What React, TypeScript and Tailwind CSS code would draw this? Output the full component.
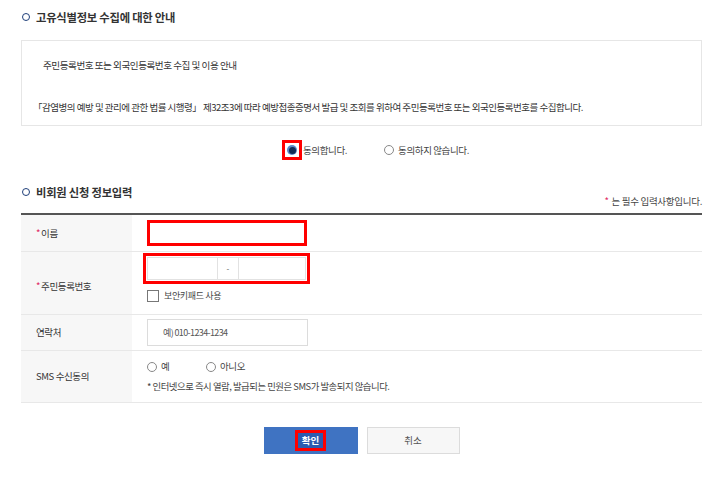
import React from 'react';

const font = { fontFamily: '"Noto Sans CJK KR", "Noto Sans", sans-serif' };

function SectionTitle({ children }: { children: React.ReactNode }) {
  return (
    <div className="flex items-center gap-[6px] h-[16px]">
      <span className="ml-[1px] w-[8px] h-[8px] rounded-full border-[1.5px] border-[#1f3f7a]" />
      <h2 className="text-[11.3px] font-bold text-[#333] tracking-[-0.02em]">{children}</h2>
    </div>
  );
}

function Radio({ checked }: { checked?: boolean }) {
  if (checked) {
    return (
      <span className="flex items-center justify-center w-[10px] h-[10px] rounded-full bg-[#5d86c4]">
        <span className="w-[7px] h-[7px] rounded-full bg-[#122c55]" />
      </span>
    );
  }
  return <span className="w-[10px] h-[10px] rounded-full border border-[#888] bg-white" />;
}

function Req() {
  return <span className="text-[#e0245e] mr-[1px]">*</span>;
}

function Row({ label, h, top, children }: { label: React.ReactNode; h: string; top?: boolean; children: React.ReactNode }) {
  return (
    <div className={`flex border-b border-[#e8e8e8] ${h}`}>
      <div className="w-[111px] shrink-0 bg-[#f7f7f7] flex items-center pl-[15px] text-[9.5px] text-[#333] tracking-[-0.04em]">
        {label}
      </div>
      <div className={`flex-1 flex flex-col pl-[15px] ${top ? 'justify-start pt-[1px]' : 'justify-center'}`}>{children}</div>
    </div>
  );
}

export default function App() {
  return (
    <div style={font} className="w-[718px] h-[487px] bg-white pl-[21px] pr-[16px] pt-[9px] text-[#333]">
      <SectionTitle>고유식별정보 수집에 대한 안내</SectionTitle>

      <div className="mt-[15px] h-[86px] border border-[#e6e6e6] pl-[21px] pt-[18px] text-[9.6px] tracking-[-0.05em] text-[#333]">
        <p className="leading-[12px]">주민등록번호 또는 외국인등록번호 수집 및 이용 안내</p>
        <p className="mt-[30px] -ml-[10px] leading-[12px] whitespace-nowrap text-[9.5px]">
          「감염병의 예방 및 관리에 관한 법률 시행령」 제32조3에 따라 예방접종증명서 발급 및 조회를 위하여 주민등록번호 또는 외국인등록번호를 수집합니다.
        </p>
      </div>

      <div className="mt-[14px] flex items-center h-[20px] text-[9.5px] text-[#444] tracking-[-0.04em]">
        <label className="flex items-center ml-[261px]">
          <span className="flex items-center justify-center w-[20px] h-[20px] border-[3px] border-[#ff0000]">
            <Radio checked />
          </span>
          <span className="ml-[1px]">동의합니다.</span>
        </label>
        <label className="flex items-center gap-[4px] ml-[37px]">
          <Radio />
          <span>동의하지 않습니다.</span>
        </label>
      </div>

      <div className="mt-[24px] flex items-end justify-between">
        <SectionTitle>비회원 신청 정보입력</SectionTitle>
        <span className="text-[9.5px] text-[#444] tracking-[-0.03em] leading-[10px] -mb-[6px]">
          <Req /> 는 필수 입력사항입니다.
        </span>
      </div>

      <div className="mt-[13px] border-t-[2px] border-[#555]">
        <Row label={<><Req />이름</>} h="h-[37px]">
          <div className="w-[160px] h-[26px] border-[3px] border-[#ff0000] bg-white" />
        </Row>

        <Row label={<span className="mt-[6px]"><Req />주민등록번호</span>} h="h-[63px]" top>
          <div className="-ml-[4px] w-[167px] h-[31px] border-[3px] border-[#ff0000] p-[1px] flex">
            <div className="flex-1 flex border border-[#e2e2e2]">
              <div className="w-[70px] border-r border-[#e2e2e2]" />
              <div className="w-[21px] border-r border-[#e2e2e2] flex items-center justify-center text-[8px] text-[#555]">-</div>
              <div className="flex-1" />
            </div>
          </div>
          <label className="mt-[5px] flex items-center gap-[5px] text-[9px] text-[#444] tracking-[-0.04em]">
            <span className="w-[12px] h-[12px] border border-[#777] bg-white" />
            보안키패드 사용
          </label>
        </Row>

        <Row label="연락처" h="h-[36px]">
          <div className="w-[161px] h-[27px] border border-[#dcdcdc] flex items-center pl-[15px] text-[9px] text-[#555] tracking-[-0.07em]">
            예) 010-1234-1234
          </div>
        </Row>

        <Row label="SMS 수신동의" h="h-[52px]">
          <div className="flex items-center text-[9.5px] text-[#444] tracking-[-0.04em] -mt-[3px]">
            <Radio />
            <span className="ml-[4px] w-[45px]">예</span>
            <Radio />
            <span className="ml-[4px]">아니오</span>
          </div>
          <p className="mt-[7px] text-[9.4px] text-[#444] tracking-[-0.05em] leading-[10px]">
            * 인터넷으로 즉시 열람, 발급되는 민원은 SMS가 발송되지 않습니다.
          </p>
        </Row>
      </div>

      <div className="mt-[24px] flex justify-center gap-[9px]">
        <button className="w-[94px] h-[27px] bg-[#3f73c2] flex items-center justify-center">
          <span className="border-[3px] border-[#ff0000] bg-[#2d5bb0] px-[4px] h-[21px] flex items-center text-[9.5px] font-bold text-white">
            확인
          </span>
        </button>
        <button className="w-[93px] h-[27px] bg-[#f7f7f7] border border-[#dcdcdc] text-[9.5px] text-[#555]">
          취소
        </button>
      </div>
    </div>
  );
}
